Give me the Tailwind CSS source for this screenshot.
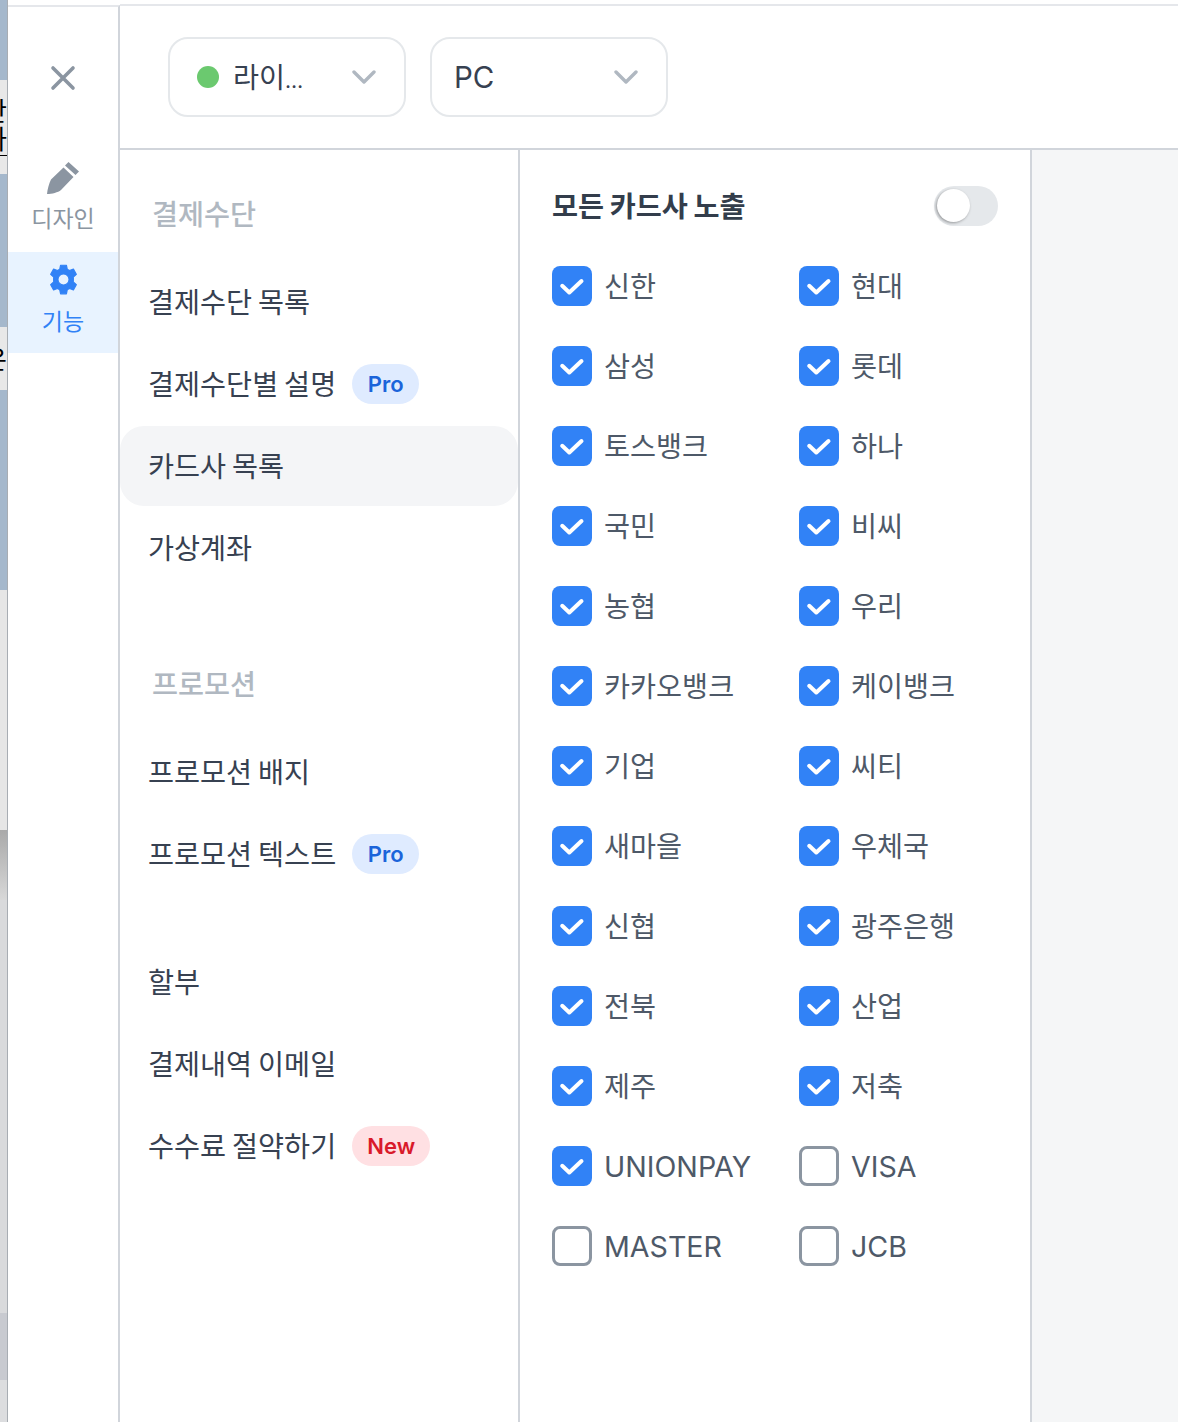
<!DOCTYPE html>
<html lang="ko">
<head>
<meta charset="utf-8">
<script src="https://cdn.jsdelivr.net/npm/@tailwindcss/browser@4"></script>
</head>
<body class="bg-white">
<div class="relative flex h-[1422px] w-[1178px] overflow-hidden bg-white font-['Inter','Noto_Sans_CJK_KR',sans-serif] text-[#374151]">
  <!-- background page strip -->
  <div class="relative flex h-full w-2 shrink-0 flex-col overflow-hidden border-r border-[#a8adb3] text-black">
    <div class="h-20 shrink-0 bg-[#a5b8cc]"></div>
    <div class="h-[94px] shrink-0 bg-[#e8e8e8]"></div>
    <div class="h-[153px] shrink-0 bg-[#a5b8cc]"></div>
    <div class="h-[63px] shrink-0 bg-[#e8e8e8]"></div>
    <div class="h-[200px] shrink-0 bg-[#a5b8cc]"></div>
    <div class="h-[240px] shrink-0 bg-[#e6e6e6]"></div>
    <div class="h-[70px] shrink-0 bg-gradient-to-b from-[#a9a9a9] to-[#d8d8d8]"></div>
    <div class="h-[413px] shrink-0 bg-[#d9dadc]"></div>
    <div class="h-[67px] shrink-0 bg-[#c8cad0]"></div>
    <div class="h-[42px] shrink-0 bg-[#dcdddf]"></div>
    <span class="absolute -left-[17px] top-[94px] text-[26px] leading-[36px]">난</span>
    <span class="absolute -left-[17px] top-[122px] text-[26px] leading-[36px]">자</span>
    <span class="absolute left-0 top-[155px] h-px w-2 bg-black"></span>
    <span class="absolute -left-[17px] top-[342px] text-[26px] leading-[36px]">은</span>
  </div>

  <!-- icon rail -->
  <div class="mt-[5px] flex w-[112px] shrink-0 flex-col border-r-2 border-t-2 border-r-[#d1d5db] border-t-[#e5e7eb]">
    <div class="flex h-[143px] shrink-0 items-start justify-center pt-[58px]">
      <svg class="size-[26px]" viewBox="0 0 26 26" fill="none" stroke="#8b95a1" stroke-width="3.6" stroke-linecap="round"><path d="M3 3 23 23M23 3 3 23"/></svg>
    </div>
    <div class="flex h-[102px] shrink-0 flex-col items-center">
      <svg class="mt-[11px] size-[34px] shrink-0" viewBox="0 0 34 34" fill="#8b95a1"><path d="M22.5 1 33 10.5 29.5 14 19 4.5ZM17.5 6.5 27.500 16 15 29C12 31.500 6 33 1 33 1.500 28 3 22.500 5 18.500Z"/></svg>
      <span class="mt-[9px] text-[23px] leading-[30px] text-[#8b95a1]">디자인</span>
    </div>
    <div class="flex h-[101px] shrink-0 flex-col items-center bg-[#e8f3ff]">
      <svg class="mt-[10px] size-[35px] shrink-0" viewBox="0 0 24 24" fill="#3182f6" stroke="#3182f6" stroke-width="0.8" stroke-linejoin="round"><path fill-rule="evenodd" d="M10 2.200h4l.6 2.800 1.500.8 2.700-.9 2 3.600-2.100 1.900c.1.900.1 2.300 0 3.200l2.100 1.900-2 3.600-2.700-.9-1.500.8-.6 2.800h-4l-.6-2.800-1.500-.8-2.700.9-2-3.600 2.100-1.900c-.1-.9-.1-2.300 0-3.200L3.200 8.500l2-3.600 2.700.9 1.500-.8ZM12 8.200a3.800 3.800 0 1 0 0 7.600 3.800 3.800 0 0 0 0-7.600Z"/></svg>
      <span class="mt-[10px] text-[23px] leading-[30px] text-[#3182f6]">기능</span>
    </div>
  </div>

  <div class="flex min-w-0 flex-1 flex-col">
    <!-- top bar -->
    <div class="mt-[4px] flex h-[146px] shrink-0 items-start gap-6 border-t-2 border-b-2 border-t-[#e5e7eb] border-b-[#d1d5db] pl-12 pt-[31px]">
      <div class="flex h-20 w-[238px] items-center rounded-[20px] border-2 border-[#e5e8eb] pl-[27px] pr-[28px]">
        <span class="size-[22px] rounded-full bg-[#6bc96f]"></span>
        <span class="ml-[14px] pt-[2px] text-[28.3px] text-[#374151]">라이<span class="text-[21px]">…</span></span>
        <svg class="ml-auto size-[24px]" viewBox="0 0 24 24" fill="none" stroke="#b0b8c1" stroke-width="3.4" stroke-linecap="round" stroke-linejoin="round"><path d="M2 7 12 17 22 7"/></svg>
      </div>
      <div class="flex h-20 w-[238px] items-center rounded-[20px] border-2 border-[#e5e8eb] pl-[22px] pr-[28px]">
        <span class="text-[29.500px] text-[#374151]">PC</span>
        <svg class="ml-auto size-[24px]" viewBox="0 0 24 24" fill="none" stroke="#b0b8c1" stroke-width="3.4" stroke-linecap="round" stroke-linejoin="round"><path d="M2 7 12 17 22 7"/></svg>
      </div>
    </div>

    <div class="flex min-h-0 flex-1">
      <!-- menu -->
      <div class="flex w-[400px] shrink-0 flex-col border-r-2 border-[#d1d5db] text-[28.3px] [word-spacing:-2px]">
        <div class="mt-[24px] flex h-20 items-center pl-8 font-medium text-[#b0b8c1]"><span class="pt-[2px]">결제수단</span></div>
        <div class="mt-[8px] flex h-20 items-center pl-7"><span class="pt-[2px]">결제수단 목록</span></div>
        <div class="mt-[2px] flex h-20 items-center pl-7"><span class="pt-[2px]">결제수단별 설명</span><span class="ml-[16px] flex h-10 w-[67px] items-center justify-center rounded-full bg-[#dfebff] text-[22px] font-semibold text-[#1b64da]">Pro</span></div>
        <div class="mt-[2px] flex h-20 w-[398px] items-center rounded-[24px] bg-[#f4f5f7] pl-7"><span class="pt-[2px]">카드사 목록</span></div>
        <div class="mt-[2px] flex h-20 items-center pl-7"><span class="pt-[2px]">가상계좌</span></div>
        <div class="mt-[56px] flex h-20 items-center pl-8 font-medium text-[#b0b8c1]"><span class="pt-[2px]">프로모션</span></div>
        <div class="mt-[8px] flex h-20 items-center pl-7"><span class="pt-[2px]">프로모션 배지</span></div>
        <div class="mt-[2px] flex h-20 items-center pl-7"><span class="pt-[2px]">프로모션 텍스트</span><span class="ml-[16px] flex h-10 w-[67px] items-center justify-center rounded-full bg-[#dfebff] text-[22px] font-semibold text-[#1b64da]">Pro</span></div>
        <div class="mt-[48px] flex h-20 items-center pl-7"><span class="pt-[2px]">할부</span></div>
        <div class="mt-[2px] flex h-20 items-center pl-7"><span class="pt-[2px]">결제내역 이메일</span></div>
        <div class="mt-[2px] flex h-20 items-center pl-7"><span class="pt-[2px]">수수료 절약하기</span><span class="ml-[16px] flex h-10 w-[78px] items-center justify-center rounded-full bg-[#ffe0e3] text-[22px] font-semibold text-[#d91a2a]">New</span></div>
      </div>

      <!-- card list -->
      <div class="w-[512px] shrink-0 border-r-2 border-[#d1d5db] pl-8 pt-[36px]">
        <div class="flex h-10 w-[446px] items-center justify-between">
          <span class="pt-[2px] text-[28.3px] font-semibold text-[#333d4b] [word-spacing:-1.5px]">모든 카드사 노출</span>
          <span class="relative block h-10 w-16 rounded-full bg-[#e5e8eb]"><span class="absolute left-[3px] top-[3px] size-[33px] rounded-full bg-white shadow-[-1px_1px_3px_rgba(0,0,0,0.35)]"></span></span>
        </div>
        <div class="mt-[40px] grid grid-cols-[247px_1fr] gap-y-10 text-[28.3px] text-[#4e5968]">
          <div class="flex h-10 items-center gap-3"><span class="flex size-10 items-center justify-center rounded-[8px] bg-[#3182f6]"><svg class="size-[26px]" viewBox="0 0 26 26" fill="none" stroke="#fff" stroke-width="4" stroke-linecap="round" stroke-linejoin="round"><path d="M3.200 12.800 10.300 19.500 22.500 8"/></svg></span><span class="pt-[2px]">신한</span></div>
          <div class="flex h-10 items-center gap-3"><span class="flex size-10 items-center justify-center rounded-[8px] bg-[#3182f6]"><svg class="size-[26px]" viewBox="0 0 26 26" fill="none" stroke="#fff" stroke-width="4" stroke-linecap="round" stroke-linejoin="round"><path d="M3.200 12.800 10.300 19.500 22.500 8"/></svg></span><span class="pt-[2px]">현대</span></div>
          <div class="flex h-10 items-center gap-3"><span class="flex size-10 items-center justify-center rounded-[8px] bg-[#3182f6]"><svg class="size-[26px]" viewBox="0 0 26 26" fill="none" stroke="#fff" stroke-width="4" stroke-linecap="round" stroke-linejoin="round"><path d="M3.200 12.800 10.300 19.500 22.500 8"/></svg></span><span class="pt-[2px]">삼성</span></div>
          <div class="flex h-10 items-center gap-3"><span class="flex size-10 items-center justify-center rounded-[8px] bg-[#3182f6]"><svg class="size-[26px]" viewBox="0 0 26 26" fill="none" stroke="#fff" stroke-width="4" stroke-linecap="round" stroke-linejoin="round"><path d="M3.200 12.800 10.300 19.500 22.500 8"/></svg></span><span class="pt-[2px]">롯데</span></div>
          <div class="flex h-10 items-center gap-3"><span class="flex size-10 items-center justify-center rounded-[8px] bg-[#3182f6]"><svg class="size-[26px]" viewBox="0 0 26 26" fill="none" stroke="#fff" stroke-width="4" stroke-linecap="round" stroke-linejoin="round"><path d="M3.200 12.800 10.300 19.500 22.500 8"/></svg></span><span class="pt-[2px]">토스뱅크</span></div>
          <div class="flex h-10 items-center gap-3"><span class="flex size-10 items-center justify-center rounded-[8px] bg-[#3182f6]"><svg class="size-[26px]" viewBox="0 0 26 26" fill="none" stroke="#fff" stroke-width="4" stroke-linecap="round" stroke-linejoin="round"><path d="M3.200 12.800 10.300 19.500 22.500 8"/></svg></span><span class="pt-[2px]">하나</span></div>
          <div class="flex h-10 items-center gap-3"><span class="flex size-10 items-center justify-center rounded-[8px] bg-[#3182f6]"><svg class="size-[26px]" viewBox="0 0 26 26" fill="none" stroke="#fff" stroke-width="4" stroke-linecap="round" stroke-linejoin="round"><path d="M3.200 12.800 10.300 19.500 22.500 8"/></svg></span><span class="pt-[2px]">국민</span></div>
          <div class="flex h-10 items-center gap-3"><span class="flex size-10 items-center justify-center rounded-[8px] bg-[#3182f6]"><svg class="size-[26px]" viewBox="0 0 26 26" fill="none" stroke="#fff" stroke-width="4" stroke-linecap="round" stroke-linejoin="round"><path d="M3.200 12.800 10.300 19.500 22.500 8"/></svg></span><span class="pt-[2px]">비씨</span></div>
          <div class="flex h-10 items-center gap-3"><span class="flex size-10 items-center justify-center rounded-[8px] bg-[#3182f6]"><svg class="size-[26px]" viewBox="0 0 26 26" fill="none" stroke="#fff" stroke-width="4" stroke-linecap="round" stroke-linejoin="round"><path d="M3.200 12.800 10.300 19.500 22.500 8"/></svg></span><span class="pt-[2px]">농협</span></div>
          <div class="flex h-10 items-center gap-3"><span class="flex size-10 items-center justify-center rounded-[8px] bg-[#3182f6]"><svg class="size-[26px]" viewBox="0 0 26 26" fill="none" stroke="#fff" stroke-width="4" stroke-linecap="round" stroke-linejoin="round"><path d="M3.200 12.800 10.300 19.500 22.500 8"/></svg></span><span class="pt-[2px]">우리</span></div>
          <div class="flex h-10 items-center gap-3"><span class="flex size-10 items-center justify-center rounded-[8px] bg-[#3182f6]"><svg class="size-[26px]" viewBox="0 0 26 26" fill="none" stroke="#fff" stroke-width="4" stroke-linecap="round" stroke-linejoin="round"><path d="M3.200 12.800 10.300 19.500 22.500 8"/></svg></span><span class="pt-[2px]">카카오뱅크</span></div>
          <div class="flex h-10 items-center gap-3"><span class="flex size-10 items-center justify-center rounded-[8px] bg-[#3182f6]"><svg class="size-[26px]" viewBox="0 0 26 26" fill="none" stroke="#fff" stroke-width="4" stroke-linecap="round" stroke-linejoin="round"><path d="M3.200 12.800 10.300 19.500 22.500 8"/></svg></span><span class="pt-[2px]">케이뱅크</span></div>
          <div class="flex h-10 items-center gap-3"><span class="flex size-10 items-center justify-center rounded-[8px] bg-[#3182f6]"><svg class="size-[26px]" viewBox="0 0 26 26" fill="none" stroke="#fff" stroke-width="4" stroke-linecap="round" stroke-linejoin="round"><path d="M3.200 12.800 10.300 19.500 22.500 8"/></svg></span><span class="pt-[2px]">기업</span></div>
          <div class="flex h-10 items-center gap-3"><span class="flex size-10 items-center justify-center rounded-[8px] bg-[#3182f6]"><svg class="size-[26px]" viewBox="0 0 26 26" fill="none" stroke="#fff" stroke-width="4" stroke-linecap="round" stroke-linejoin="round"><path d="M3.200 12.800 10.300 19.500 22.500 8"/></svg></span><span class="pt-[2px]">씨티</span></div>
          <div class="flex h-10 items-center gap-3"><span class="flex size-10 items-center justify-center rounded-[8px] bg-[#3182f6]"><svg class="size-[26px]" viewBox="0 0 26 26" fill="none" stroke="#fff" stroke-width="4" stroke-linecap="round" stroke-linejoin="round"><path d="M3.200 12.800 10.300 19.500 22.500 8"/></svg></span><span class="pt-[2px]">새마을</span></div>
          <div class="flex h-10 items-center gap-3"><span class="flex size-10 items-center justify-center rounded-[8px] bg-[#3182f6]"><svg class="size-[26px]" viewBox="0 0 26 26" fill="none" stroke="#fff" stroke-width="4" stroke-linecap="round" stroke-linejoin="round"><path d="M3.200 12.800 10.300 19.500 22.500 8"/></svg></span><span class="pt-[2px]">우체국</span></div>
          <div class="flex h-10 items-center gap-3"><span class="flex size-10 items-center justify-center rounded-[8px] bg-[#3182f6]"><svg class="size-[26px]" viewBox="0 0 26 26" fill="none" stroke="#fff" stroke-width="4" stroke-linecap="round" stroke-linejoin="round"><path d="M3.200 12.800 10.300 19.500 22.500 8"/></svg></span><span class="pt-[2px]">신협</span></div>
          <div class="flex h-10 items-center gap-3"><span class="flex size-10 items-center justify-center rounded-[8px] bg-[#3182f6]"><svg class="size-[26px]" viewBox="0 0 26 26" fill="none" stroke="#fff" stroke-width="4" stroke-linecap="round" stroke-linejoin="round"><path d="M3.200 12.800 10.300 19.500 22.500 8"/></svg></span><span class="pt-[2px]">광주은행</span></div>
          <div class="flex h-10 items-center gap-3"><span class="flex size-10 items-center justify-center rounded-[8px] bg-[#3182f6]"><svg class="size-[26px]" viewBox="0 0 26 26" fill="none" stroke="#fff" stroke-width="4" stroke-linecap="round" stroke-linejoin="round"><path d="M3.200 12.800 10.300 19.500 22.500 8"/></svg></span><span class="pt-[2px]">전북</span></div>
          <div class="flex h-10 items-center gap-3"><span class="flex size-10 items-center justify-center rounded-[8px] bg-[#3182f6]"><svg class="size-[26px]" viewBox="0 0 26 26" fill="none" stroke="#fff" stroke-width="4" stroke-linecap="round" stroke-linejoin="round"><path d="M3.200 12.800 10.300 19.500 22.500 8"/></svg></span><span class="pt-[2px]">산업</span></div>
          <div class="flex h-10 items-center gap-3"><span class="flex size-10 items-center justify-center rounded-[8px] bg-[#3182f6]"><svg class="size-[26px]" viewBox="0 0 26 26" fill="none" stroke="#fff" stroke-width="4" stroke-linecap="round" stroke-linejoin="round"><path d="M3.200 12.800 10.300 19.500 22.500 8"/></svg></span><span class="pt-[2px]">제주</span></div>
          <div class="flex h-10 items-center gap-3"><span class="flex size-10 items-center justify-center rounded-[8px] bg-[#3182f6]"><svg class="size-[26px]" viewBox="0 0 26 26" fill="none" stroke="#fff" stroke-width="4" stroke-linecap="round" stroke-linejoin="round"><path d="M3.200 12.800 10.300 19.500 22.500 8"/></svg></span><span class="pt-[2px]">저축</span></div>
          <div class="flex h-10 items-center gap-3 text-[28.6px]"><span class="flex size-10 items-center justify-center rounded-[8px] bg-[#3182f6]"><svg class="size-[26px]" viewBox="0 0 26 26" fill="none" stroke="#fff" stroke-width="4" stroke-linecap="round" stroke-linejoin="round"><path d="M3.200 12.800 10.300 19.500 22.500 8"/></svg></span><span class="pt-[2px]">UNIONPAY</span></div>
          <div class="flex h-10 items-center gap-3 text-[28.6px]"><span class="size-10 rounded-[8px] border-[3px] border-[#8b95a1] bg-white"></span><span class="pt-[2px]">VISA</span></div>
          <div class="flex h-10 items-center gap-3 text-[28.6px]"><span class="size-10 rounded-[8px] border-[3px] border-[#8b95a1] bg-white"></span><span class="pt-[2px]">MASTER</span></div>
          <div class="flex h-10 items-center gap-3 text-[28.6px]"><span class="size-10 rounded-[8px] border-[3px] border-[#8b95a1] bg-white"></span><span class="pt-[2px]">JCB</span></div>
        </div>
      </div>
      <div class="min-w-0 flex-1 bg-[#f5f6f7]"></div>
    </div>
  </div>
</div>
</body>
</html>
